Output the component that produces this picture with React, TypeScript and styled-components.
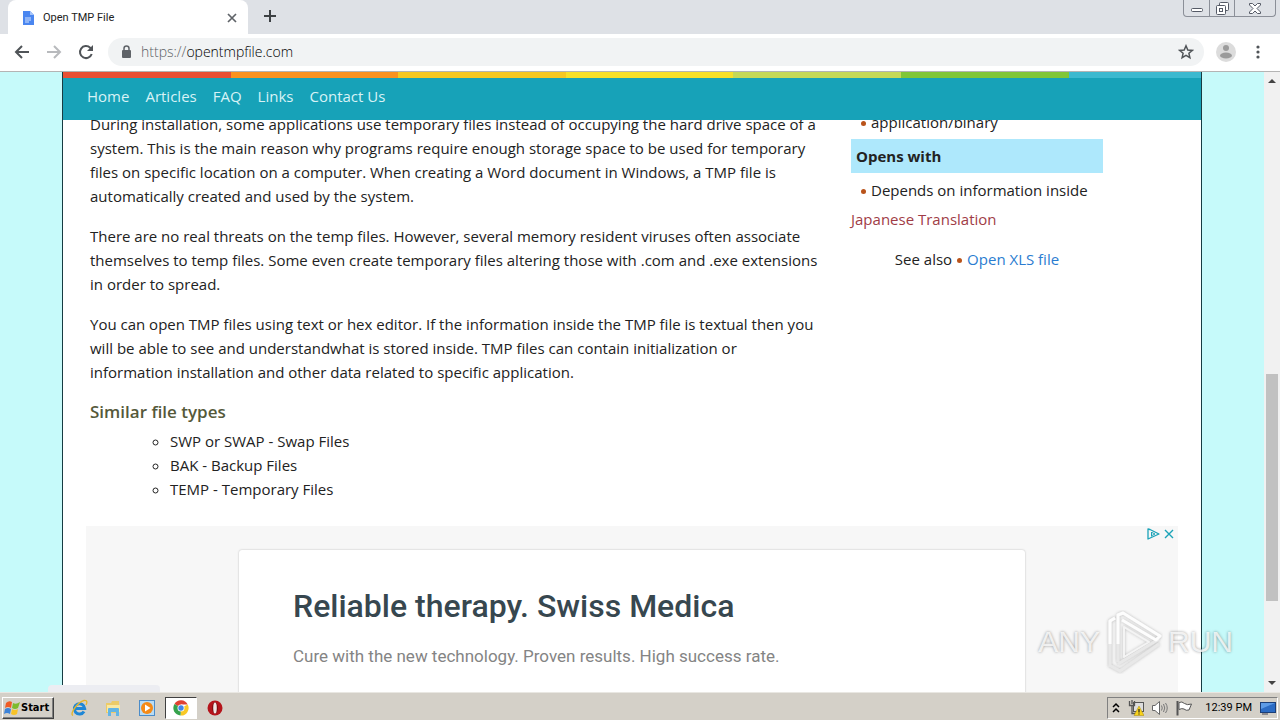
import React from "react";
import styled, { createGlobalStyle } from "styled-components";

const Global = createGlobalStyle`
  *, *::before, *::after { box-sizing: border-box; }
  body { margin: 0; overflow: hidden; font-family: "Open Sans", "Noto Sans", sans-serif; font-size: 16px; line-height: 24px; color: #222; }
  button, input { font: inherit; color: inherit; border: 0; padding: 0; background: none; }
  h1, h2, h3, p, ul { margin: 0; padding: 0; }
  a { text-decoration: none; color: inherit; }
  svg { display: block; flex: none; }
`;

const Desktop = styled.div`
  position: relative;
  display: flex;
  flex-direction: column;
  height: 100vh;
`;

const TabStrip = styled.header`
  position: relative;
  display: flex;
  height: 34px;
  padding-left: 8px;
  background: #dee1e6;
`;

const Tab = styled.div`
  display: flex;
  align-items: center;
  gap: 9px;
  width: 240px;
  padding: 1px 10px 0 14px;
  border-radius: 8px 8px 0 0;
  background: #fff;
  font-family: Roboto, sans-serif;
  font-size: 11px;
  line-height: 16px;
`;

const TabTitle = styled.span`
  flex: 1;
`;

const IconButton = styled.button<{ $size?: number }>`
  display: flex;
  align-items: center;
  justify-content: center;
  flex: none;
  width: ${(p) => p.$size ?? 32}px;
  height: ${(p) => p.$size ?? 32}px;
`;

const NewTab = styled(IconButton)`
  margin-left: 6px;
`;

const WindowControls = styled.div`
  display: flex;
  height: 17px;
  margin: 0 4px 0 auto;
  border: 1px solid #8b8f98;
  border-top: 0;
  border-radius: 0 0 4px 4px;
`;

const WindowButton = styled.button<{ $wide?: boolean }>`
  display: flex;
  align-items: center;
  justify-content: center;
  width: ${(p) => (p.$wide ? 41 : 25)}px;
  & + & { border-left: 1px solid #8b8f98; }
`;

const Toolbar = styled.div`
  display: flex;
  align-items: center;
  height: 38px;
  padding: 0 6px 1px;
  border-bottom: 1px solid #b4b4b4;
  background: #fff;
`;

const Omnibox = styled.label`
  position: relative;
  display: flex;
  flex: 1;
  align-items: center;
  gap: 9px;
  height: 28px;
  margin: 0 6px;
  padding: 0 2px 0 12px;
  border-radius: 14px;
  background: #f1f3f4;
`;

const Address = styled.div`
  position: relative;
  flex: 1;
  font-size: 14px;
  font-weight: 300;
  line-height: 20px;
  color: #000;
`;

const AddressInput = styled.input`
  position: absolute;
  inset: 0;
  width: 100%;
  color: transparent;
`;

const Scheme = styled.span`
  color: #5b5f64;
`;

const Viewport = styled.div`
  position: relative;
  display: flex;
  flex: 1;
  min-height: 0;
  overflow: hidden;
  background: #c6fafa;
`;

const Page = styled.div`
  flex: 1;
  padding: 0 62px;
`;

const Container = styled.div`
  max-width: 1140px;
  min-height: 100%;
  margin: 0 auto;
  border: solid #173c42;
  border-width: 0 1px;
  background: #fff;
`;

const SiteHeader = styled.div`
  position: relative;
  z-index: 1;
`;

const Stripe = styled.div`
  height: 6px;
  background: repeating-linear-gradient(
    90deg,
    #e84f33 0 168px,
    #f9921f 168px 335px,
    #f5c822 335px 503px,
    #f6e02a 503px 670px,
    #c6d957 670px 838px,
    #80c637 838px 1006px,
    #3cb9cf 1006px 1174px
  );
`;

const Nav = styled.nav`
  display: flex;
  gap: 16px;
  height: 42px;
  padding: 6px 24px;
  background: #17a2b8;
  color: #d8f2f6;
  font-size: 15px;
`;

const Columns = styled.div`
  display: flex;
  margin-top: -8px;
  padding-left: 27px;
  font-size: 15px;
`;

const Article = styled.main`
  width: 761px;
  white-space: nowrap;
`;

const Paragraph = styled.p`
  margin-bottom: 16px;
`;

const Subheading = styled.h2`
  font-size: 17px;
  font-weight: 600;
  color: #55593a;
`;

const TypeList = styled.ul`
  margin: 5px 0 25px;
  padding-left: 80px;
  list-style: circle;
`;

const Aside = styled.aside`
  width: 252px;
  margin-top: -2px;
`;

const BulletLine = styled.div`
  display: flex;
  align-items: center;
  gap: 5px;
  height: 24px;
  padding-left: 10px;
`;

const Bullet = styled.i`
  width: 5px;
  height: 5px;
  margin-top: 3px;
  border-radius: 50%;
  background: #b9531a;
`;

const OpensWith = styled.h3`
  margin: 5px 0;
  padding: 5px;
  background: #aee8fc;
  font-size: 15px;
  font-weight: 700;
`;

const Translation = styled.a`
  display: block;
  margin-top: 5px;
  color: #a03c46;
`;

const SeeAlso = styled.div`
  display: flex;
  align-items: center;
  justify-content: center;
  gap: 5px;
  margin-top: 16px;
  a { color: #2a7cd0; }
`;

const Ad = styled.section`
  position: relative;
  margin: 0 23px;
  padding: 24px 153px 0;
  background: #f7f7f7;
  font-family: Roboto, sans-serif;
`;

const AdChoices = styled.div`
  position: absolute;
  top: 0;
  right: 1px;
  display: flex;
`;

const AdCard = styled.div`
  height: 240px;
  padding: 36px 54px;
  border-radius: 3px;
  background: #fff;
  box-shadow: 0 0 2px #0004;
`;

const AdTitle = styled.h2`
  font-size: 32px;
  line-height: 40px;
  font-weight: 500;
  color: #37474f;
`;

const AdText = styled.p`
  margin-top: 18px;
  font-size: 17px;
  color: #848484;
`;

const ScrollTrack = styled.div`
  display: flex;
  flex-direction: column;
  align-items: center;
  width: 16px;
  background: #f1f1f1;
`;

const Thumb = styled.div`
  width: 12px;
  height: 227px;
  margin: 286px 0 auto;
  background: #c1c1c1;
`;

const StatusBubble = styled.div`
  position: absolute;
  bottom: 0;
  left: 48px;
  width: 112px;
  height: 7px;
  border-radius: 4px 4px 0 0;
  background: #ecedf2;
`;

const Watermark = styled.div`
  position: absolute;
  right: 47px;
  bottom: 46px;
  display: flex;
  align-items: center;
  gap: 5px;
  font-family: "Liberation Sans", sans-serif;
  font-size: 30px;
  line-height: 64px;
  color: #fffc;
  text-shadow: 0 0 3px #0006;
  pointer-events: none;
`;

const Taskbar = styled.footer`
  display: flex;
  align-items: center;
  height: 28px;
  padding: 2px 2px 0;
  border-top: 1px solid #e9e7e2;
  background: #d4d0c8;
  font-family: "DejaVu Sans Condensed", "DejaVu Sans", sans-serif;
  font-size: 11px;
  line-height: 16px;
  color: #000;
`;

const StartButton = styled.button`
  display: flex;
  align-items: center;
  gap: 1px;
  width: 52px;
  height: 22px;
  padding-left: 1px;
  border: 1px solid;
  border-color: #fff #404040 #404040 #fff;
  box-shadow: inset -1px -1px #808080;
  font-weight: 700;
`;

const Launchers = styled.div`
  display: flex;
  gap: 2px;
  margin-left: 9px;
`;

const Launcher = styled.button<{ $active?: boolean }>`
  display: flex;
  align-items: center;
  justify-content: center;
  width: 32px;
  height: 22px;
  border: 1px solid;
  border-color: ${(p) => (p.$active ? "#404040 #fff #fff #404040" : "transparent")};
  background: ${(p) => (p.$active ? "#fff" : "none")};
`;

const Tray = styled.div`
  display: flex;
  align-items: center;
  gap: 8px;
  height: 22px;
  margin-left: auto;
  padding: 0 1px 0 4px;
  border: 1px solid;
  border-color: #808080 #fff #fff #808080;
`;

const TrayButton = styled.button`
  display: flex;
`;

const Clock = styled.time`
  margin-left: 5px;
  font-family: Roboto, sans-serif;
  font-size: 11px;
`;

const WindowsLogo = () => (
  <svg width="16" height="16" viewBox="0 0 16 16" aria-hidden="true">
    <path d="M2 3Q5 0 8 2L7 8Q4 6 1 8Z" fill="#ef5b25" />
    <path d="M9 3Q12 5 16 2L14 8Q11 10 8 8Z" fill="#7dbb2d" />
    <path d="M1 9Q4 7 7 9L6 14Q3 12 0 14Z" fill="#3d83d8" />
    <path d="M8 9Q11 11 14 9L13 14Q10 16 7 14Z" fill="#f8c328" />
  </svg>
);

const ExplorerE = () => (
  <svg width="18" height="18" viewBox="0 0 18 18" aria-hidden="true">
    <path d="M14 12.500A5.200 5.200 0 1 1 14.700 9.500H5" fill="none" stroke="#1f87d6" strokeWidth="3" />
    <path d="M3 16.500C-1 15 8 3 14 1.500C18 1 17 4 16 6" fill="none" stroke="#e5b52c" strokeWidth="1.300" />
  </svg>
);

const Folder = () => (
  <svg width="18" height="18" viewBox="0 0 18 18" aria-hidden="true">
    <path d="M2 4H7L8 2H15V14H2Z" fill="#eccb68" />
    <path d="M3 6H16V13H3Z" fill="#f9e8a2" />
    <path d="M4 17V10Q4 9 5 9H14Q15 9 15 10V17H12V13H7V17Z" fill="#62b5e5" />
  </svg>
);

const MediaPlayer = () => (
  <svg width="18" height="18" viewBox="0 0 18 18" aria-hidden="true">
    <rect x="1.500" y="1.500" width="15" height="15" fill="#b9dcf4" stroke="#4b8cc9" />
    <circle cx="9" cy="9" r="6" fill="#f58a16" />
    <path d="M7 5.500L12.500 9L7 12.500Z" fill="#fff" />
  </svg>
);

const Chrome = () => (
  <svg width="16" height="16" viewBox="0 0 16 16" aria-hidden="true">
    <path d="M8 8L1.500 4A7.500 7.500 0 0 1 14.700 4.500H8Z" fill="#e04232" />
    <path d="M8 8L14.700 4.500A7.500 7.500 0 0 1 7.500 15.500Z" fill="#f9c927" />
    <path d="M8 8L7.500 15.500A7.500 7.500 0 0 1 1.500 4Z" fill="#35a24c" />
    <circle cx="8" cy="8" r="3.500" fill="#fff" />
    <circle cx="8" cy="8" r="2.700" fill="#4285e8" />
  </svg>
);

const Opera = () => (
  <svg width="16" height="16" viewBox="0 0 16 16" aria-hidden="true">
    <circle cx="8" cy="8" r="7.500" fill="#b5141b" />
    <ellipse cx="8" cy="8" rx="2.800" ry="5.800" fill="#6c080c" />
    <ellipse cx="8" cy="8" rx="1.800" ry="5.500" fill="#f1e6e4" />
  </svg>
);

const PlayMark = () => (
  <svg width="58" height="64" viewBox="0 0 58 64" aria-hidden="true">
    <defs>
      <filter id="halo" x="-20%" y="-20%" width="140%" height="140%">
        <feDropShadow dx="0" dy="0" stdDeviation="1.500" floodColor="#777" floodOpacity="0.600" />
      </filter>
    </defs>
    <g filter="url(#halo)" fill="none" strokeWidth="3" strokeLinejoin="round" opacity="0.850">
      <path d="M5 57V11L10 8M13 54L54 29M6 56L15 61L54 34M13 52V34" stroke="#e6e6e6" />
      <path d="M5 34V11L10 8M13 34V5L18 3L55 26L51 30L17 10" stroke="#fff" />
      <path d="M19 17L44 32L19 47Z" stroke="#f4f4f4" strokeWidth="2" />
    </g>
  </svg>
);

const ScrollArrow = ({ down }: { down?: boolean }) => (
  <svg width="16" height="16" viewBox="0 0 16 16" aria-hidden="true">
    <path d={down ? "M4 5H12L8 9Z" : "M4 11H12L8 7Z"} fill="#444" />
  </svg>
);

export default function App() {
  return (
    <Desktop>
      <Global />
      <TabStrip>
        <Tab>
          <svg width="12" height="16" viewBox="0 0 12 16" aria-hidden="true">
            <path d="M1 1H8L12 5V15H1Z" fill="#4a86f0" />
            <path d="M8 1L12 5H8Z" fill="#a5c4fa" />
            <path d="M3 8H9M3 10H9M3 12H7" stroke="#d5e3fc" />
          </svg>
          <TabTitle>Open TMP File</TabTitle>
          <IconButton $size={12} aria-label="Close tab">
            <svg width="10" height="10" viewBox="0 0 10 10"><path d="M1 1L9 9M9 1L1 9" stroke="#5f6368" strokeWidth="1.700" /></svg>
          </IconButton>
        </Tab>
        <NewTab aria-label="New tab">
          <svg width="12" height="12" viewBox="0 0 12 12"><path d="M6 0V12M0 6H12" stroke="#3c4043" strokeWidth="2" /></svg>
        </NewTab>
        <WindowControls>
          <WindowButton aria-label="Minimize">
            <svg width="12" height="12" viewBox="0 0 12 12"><rect x="0.500" y="6.500" width="11" height="3" rx="1" fill="#fff" stroke="#555a66" /></svg>
          </WindowButton>
          <WindowButton aria-label="Restore">
            <svg width="13" height="13" viewBox="0 0 13 13" fill="#fff" stroke="#555a66"><rect x="3.500" y="0.500" width="9" height="8" rx="1" /><rect x="0.500" y="3.500" width="9" height="9" rx="1" /><rect x="3.500" y="6.500" width="3" height="3" /></svg>
          </WindowButton>
          <WindowButton $wide aria-label="Close">
            <svg width="12" height="11" viewBox="0 0 12 11"><path d="M0.500 0.500H3.500L6 3L8.500 0.500H11.500V2L8 5.500L11.500 9V10.500H8.500L6 8L3.500 10.500H0.500V9L4 5.500L0.500 2Z" fill="#fff" stroke="#555a66" /></svg>
          </WindowButton>
        </WindowControls>
      </TabStrip>
      <Toolbar>
        <IconButton aria-label="Back">
          <svg width="16" height="16" viewBox="0 0 16 16"><path d="M15 8H2M8 2L2 8L8 14" fill="none" stroke="#505458" strokeWidth="2" /></svg>
        </IconButton>
        <IconButton aria-label="Forward">
          <svg width="16" height="16" viewBox="0 0 16 16"><path d="M1 8H14M8 2L14 8L8 14" fill="none" stroke="#b8babd" strokeWidth="2" /></svg>
        </IconButton>
        <IconButton aria-label="Reload">
          <svg width="16" height="16" viewBox="0 0 16 16"><path d="M13.700 10A6 6 0 1 1 12.200 3.800L14 5.600" fill="none" stroke="#505458" strokeWidth="2" /><path d="M15 1V7H9Z" fill="#505458" /></svg>
        </IconButton>
        <Omnibox>
          <svg width="12" height="14" viewBox="0 0 12 14"><rect x="2" y="5" width="9" height="8" rx="1" fill="#5f6368" /><path d="M4 6V3.500A2.500 2.500 0 0 1 9 3.500V6" fill="none" stroke="#5f6368" strokeWidth="1.500" /></svg>
          <Address>
            <Scheme>https://</Scheme>opentmpfile.com
            <AddressInput aria-label="Address" />
          </Address>
          <IconButton aria-label="Bookmark">
            <svg width="16" height="16" viewBox="0 0 16 16"><path d="M8 1.800L9.800 6L14.300 6.400L10.900 9.300L11.900 13.700L8 11.400L4.100 13.700L5.100 9.300L1.700 6.400L6.200 6Z" fill="none" stroke="#505458" strokeWidth="1.500" /></svg>
          </IconButton>
        </Omnibox>
        <IconButton aria-label="Profile">
          <svg width="20" height="20" viewBox="0 0 20 20"><circle cx="10" cy="10" r="10" fill="#dcdcdc" /><circle cx="10" cy="6" r="3" fill="#9b9b9b" /><ellipse cx="10" cy="13.500" rx="6" ry="3" fill="#9b9b9b" /></svg>
        </IconButton>
        <IconButton aria-label="Menu">
          <svg width="4" height="16" viewBox="0 0 4 16" fill="#505458"><circle cx="2" cy="3" r="1.600" /><circle cx="2" cy="8" r="1.600" /><circle cx="2" cy="13" r="1.600" /></svg>
        </IconButton>
      </Toolbar>
      <Viewport>
        <Page>
          <Container>
            <SiteHeader>
              <Stripe />
              <Nav>
                <a href="#home">Home</a>
                <a href="#articles">Articles</a>
                <a href="#faq">FAQ</a>
                <a href="#links">Links</a>
                <a href="#contact">Contact Us</a>
              </Nav>
            </SiteHeader>
            <Columns>
              <Article>
                <Paragraph>
                  During installation, some applications use temporary files instead of occupying the hard drive space of a<br />
                  system. This is the main reason why programs require enough storage space to be used for temporary<br />
                  files on specific location on a computer. When creating a Word document in Windows, a TMP file is<br />
                  automatically created and used by the system.
                </Paragraph>
                <Paragraph>
                  There are no real threats on the temp files. However, several memory resident viruses often associate<br />
                  themselves to temp files. Some even create temporary files altering those with .com and .exe extensions<br />
                  in order to spread.
                </Paragraph>
                <Paragraph>
                  You can open TMP files using text or hex editor. If the information inside the TMP file is textual then you<br />
                  will be able to see and understandwhat is stored inside. TMP files can contain initialization or<br />
                  information installation and other data related to specific application.
                </Paragraph>
                <Subheading>Similar file types</Subheading>
                <TypeList>
                  <li>SWP or SWAP - Swap Files</li>
                  <li>BAK - Backup Files</li>
                  <li>TEMP - Temporary Files</li>
                </TypeList>
              </Article>
              <Aside>
                <BulletLine><Bullet />application/binary</BulletLine>
                <OpensWith>Opens with</OpensWith>
                <BulletLine><Bullet />Depends on information inside</BulletLine>
                <Translation href="#ja">Japanese Translation</Translation>
                <SeeAlso>See also <Bullet /><a href="#xls">Open XLS file</a></SeeAlso>
              </Aside>
            </Columns>
            <Ad>
              <AdChoices>
                <IconButton $size={16} aria-label="AdChoices">
                  <svg width="14" height="14" viewBox="0 0 14 14" fill="none" stroke="#1ba3b8"><path d="M2 2V12L13 7L4 2.500Z" strokeWidth="1.300" strokeLinejoin="round" /><path d="M5.500 5V9.500M6 5.500L9 7L6 8.500" /></svg>
                </IconButton>
                <IconButton $size={16} aria-label="Close ad">
                  <svg width="10" height="10" viewBox="0 0 10 10"><path d="M1 1L9 9M9 1L1 9" stroke="#1ba3b8" strokeWidth="1.400" /></svg>
                </IconButton>
              </AdChoices>
              <AdCard>
                <AdTitle>Reliable therapy. Swiss Medica</AdTitle>
                <AdText>Cure with the new technology. Proven results. High success rate.</AdText>
              </AdCard>
            </Ad>
          </Container>
        </Page>
        <ScrollTrack><ScrollArrow /><Thumb /><ScrollArrow down /></ScrollTrack>
        <StatusBubble />
      </Viewport>
      <Watermark><span>ANY</span><PlayMark /><span>RUN</span></Watermark>
      <Taskbar>
        <StartButton><WindowsLogo />Start</StartButton>
        <Launchers>
          <Launcher aria-label="Internet Explorer"><ExplorerE /></Launcher>
          <Launcher aria-label="Files"><Folder /></Launcher>
          <Launcher aria-label="Media Player"><MediaPlayer /></Launcher>
          <Launcher $active aria-label="Chrome"><Chrome /></Launcher>
          <Launcher aria-label="Opera"><Opera /></Launcher>
        </Launchers>
        <Tray>
          <TrayButton aria-label="Show hidden icons">
            <svg width="8" height="12" viewBox="0 0 8 12"><path d="M1 5L4 2L7 5M1 10L4 7L7 10" fill="none" stroke="#000" strokeWidth="1.500" /></svg>
          </TrayButton>
          <TrayButton aria-label="Network">
            <svg width="16" height="16" viewBox="0 0 16 16"><rect x="5.500" y="2.500" width="10" height="9" fill="#ddd" stroke="#555" /><path d="M1.500 1V5.500H6.500V1M4 0V4M4 6V13.500H9" fill="none" stroke="#555" strokeWidth="1.300" /><path d="M11 6L16 15.500H6Z" fill="#f8d21c" stroke="#a98908" strokeWidth="0.500" /><path d="M11 9V12.500M11 13.500V14.500" stroke="#222" strokeWidth="1.200" /></svg>
          </TrayButton>
          <TrayButton aria-label="Volume">
            <svg width="16" height="16" viewBox="0 0 16 16"><path d="M0.500 5.500H3L7.500 1.500V14.500L3 10.500H0.500Z" fill="#fff" stroke="#666" /><path d="M9.500 5.500Q11 8 9.500 10.500M11.500 4Q14 8 11.500 12M13.500 3Q17 8 13.500 13" fill="none" stroke="#777" /></svg>
          </TrayButton>
          <TrayButton aria-label="Action Center">
            <svg width="16" height="16" viewBox="0 0 16 16"><path d="M3 2.500Q6 1 8.500 3.500Q11 5.500 15.500 4L13 10Q10 11 8 9Q6 8 3 9.500Z" fill="#fff" stroke="#555" /><path d="M1.500 1V15.500" stroke="#555" strokeWidth="2" /></svg>
          </TrayButton>
          <Clock>12:39 PM</Clock>
          <TrayButton aria-label="Show desktop">
            <svg width="16" height="14" viewBox="0 0 16 14"><rect x="0.500" y="1.500" width="15" height="10" fill="#2c6cc4" stroke="#1c3f78" /><path d="M1 2H15L1 8Z" fill="#5d9be6" /><path d="M2 13H8" stroke="#445" /></svg>
          </TrayButton>
        </Tray>
      </Taskbar>
    </Desktop>
  );
}
